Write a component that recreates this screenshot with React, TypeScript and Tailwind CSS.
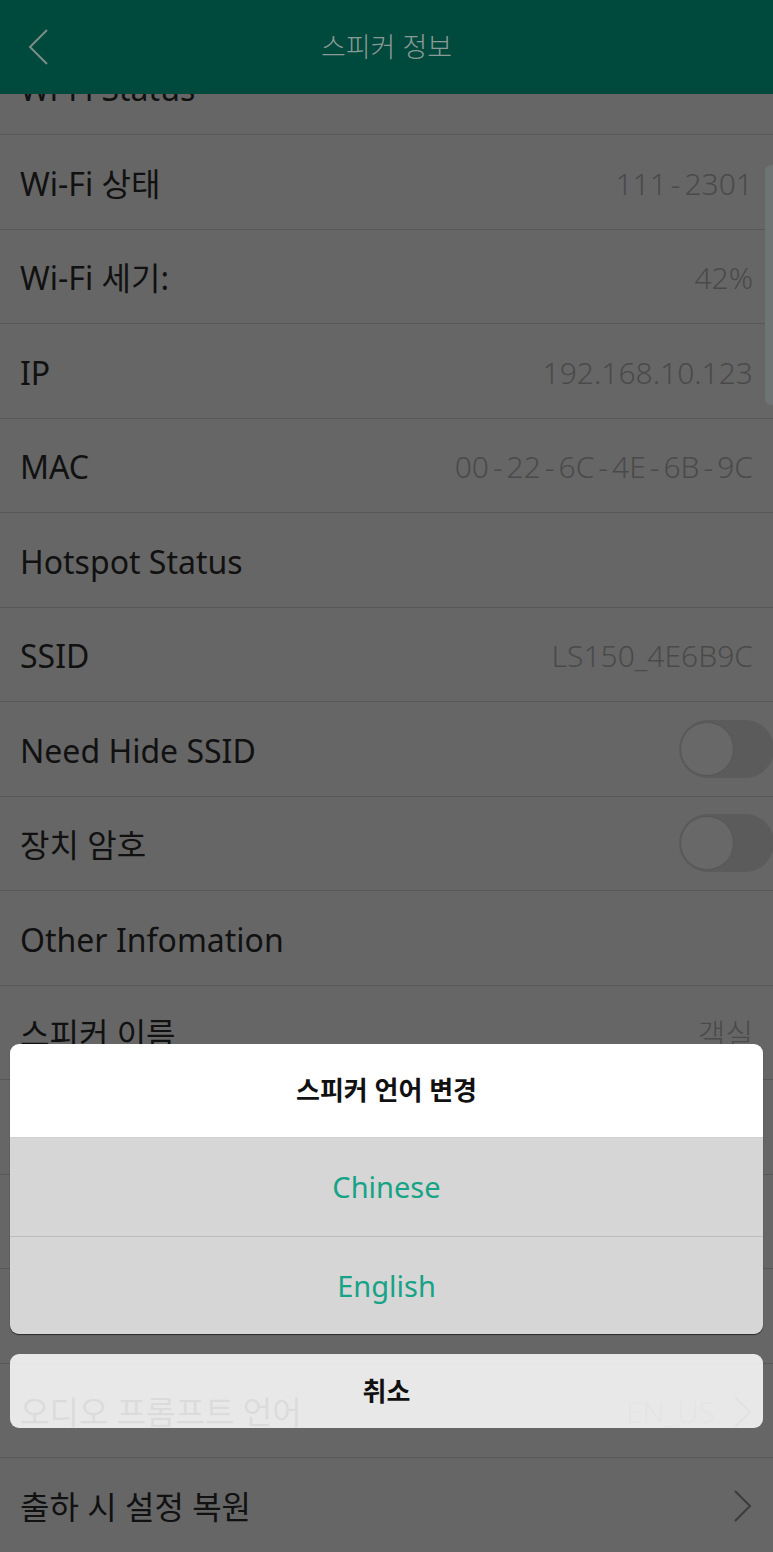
type Row =
  | { kind: 'value'; label: string; value?: string; chevron?: boolean }
  | { kind: 'toggle'; label: string }

const rows: Row[] = [
  { kind: 'value', label: 'Wi-Fi Status' },
  { kind: 'value', label: 'Wi-Fi 상태', value: '111-2301' },
  { kind: 'value', label: 'Wi-Fi 세기:', value: '42%' },
  { kind: 'value', label: 'IP', value: '192.168.10.123' },
  { kind: 'value', label: 'MAC', value: '00-22-6C-4E-6B-9C' },
  { kind: 'value', label: 'Hotspot Status' },
  { kind: 'value', label: 'SSID', value: 'LS150_4E6B9C' },
  { kind: 'toggle', label: 'Need Hide SSID' },
  { kind: 'toggle', label: '장치 암호' },
  { kind: 'value', label: 'Other Infomation' },
  { kind: 'value', label: '스피커 이름', value: '객실' },
  { kind: 'value', label: '펌웨어 버전', value: 'V1.0.2' },
  { kind: 'value', label: '스피커 언어', value: 'Chinese', chevron: true },
  { kind: 'value', label: '스피커 시간대', value: 'GMT+9', chevron: true },
  { kind: 'value', label: '오디오 프롬프트 언어', value: 'EN_US', chevron: true },
  { kind: 'value', label: '출하 시 설정 복원', chevron: true },
]

// the device font draws wide hyphens
const Value = ({ text }: { text: string }) => (
  <span className="text-[30px] font-light text-[#4a4a4a]">
    {text.split('-').map((part, i) => (
      <span key={i}>
        {i > 0 && <span className="mx-[4px]">-</span>}
        {part}
      </span>
    ))}
  </span>
)

const Chevron = ({ color = '#3c3c3c' }: { color?: string }) => (
  <svg width="20" height="34" viewBox="0 0 20 34" fill="none">
    <polyline points="2,2 17,17 2,32" stroke={color} strokeWidth="2" />
  </svg>
)

const Toggle = () => (
  <div className="relative -mr-[1px] h-[58px] w-[95px] rounded-full bg-[#5b5b5b]">
    <div className="absolute left-[1px] top-[2px] h-[54px] w-[54px] rounded-full border border-[#575757] bg-[#686868]" />
  </div>
)

const SettingRow = ({ row }: { row: Row }) => (
  <div className="flex h-[94.5px] items-center justify-between border-b border-[#575757] pl-[20px] pr-[20px]">
    <span className="pt-[4px] text-[32px] text-[#111111]">{row.label}</span>
    {row.kind === 'toggle' ? (
      <div className="-mr-[20px]">
        <Toggle />
      </div>
    ) : (
      <div className="flex items-center gap-[18px] pt-[3px]">
        {row.value && <Value text={row.value} />}
        {row.chevron && <Chevron />}
      </div>
    )}
  </div>
)

export default function App() {
  return (
    <div className="relative h-[1552px] w-[773px] overflow-hidden bg-[#666666] font-['Noto_Sans','Noto_Sans_CJK_KR',sans-serif]">
      <header className="relative z-10 flex h-[94px] items-center justify-center bg-[#00493d]">
        <div className="absolute left-[27px] top-[29px]">
          <svg width="22" height="36" viewBox="0 0 22 36" fill="none">
            <polyline points="20,1 3,18 20,35" stroke="#7b8d87" strokeWidth="2" />
          </svg>
        </div>
        <h1 className="text-[27px] font-light text-[#8a9b96]">스피커 정보</h1>
      </header>

      <div className="-mt-[53.5px]">
        {rows.map((row) => (
          <SettingRow key={row.label} row={row} />
        ))}
      </div>

      {/* scrollbar */}
      <div className="absolute right-0 top-[165px] h-[240px] w-[8px] rounded-l-[6px] bg-[#6e7373]" />

      {/* action sheet */}
      <div className="absolute left-[10px] right-[10px] top-[1044px]">
        <div className="overflow-hidden rounded-[9px] shadow-[0_1px_1px_rgba(0,0,0,0.6)]">
          <div className="flex h-[93px] items-center justify-center bg-white">
            <span className="text-[26px] font-bold text-[#111111]">스피커 언어 변경</span>
          </div>
          <div className="flex h-[99px] items-center justify-center border-t border-[#cfcfcf] bg-[#d6d6d6]">
            <span className="text-[29px] text-[#17a386]">Chinese</span>
          </div>
          <div className="flex h-[98px] items-center justify-center border-t border-[#bcbcbc] bg-[#d6d6d6]">
            <span className="text-[29px] text-[#17a386]">English</span>
          </div>
        </div>
        <div className="mt-[20px] flex h-[74px] items-center justify-center rounded-[9px] bg-white/85">
          <span className="text-[26px] font-bold text-[#111111]">취소</span>
        </div>
      </div>
    </div>
  )
}
